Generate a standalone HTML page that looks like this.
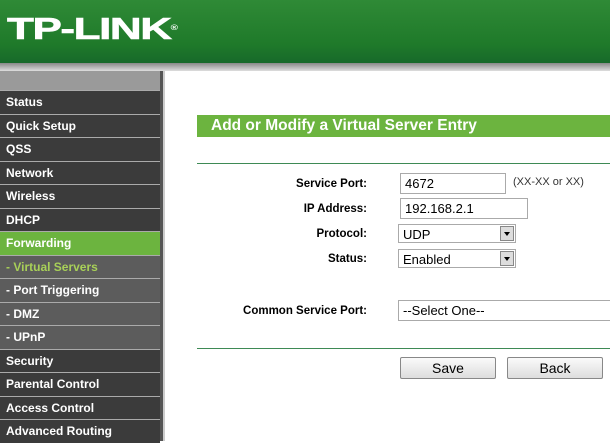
<!DOCTYPE html><html><head><style>
body{margin:0;width:610px;height:441px;overflow:hidden;background:#fff;font-family:"Liberation Sans",Arial,sans-serif;position:relative}
.hdr{position:absolute;left:0;top:0;width:610px;height:63px;background:linear-gradient(#2f8a36,#1f7a2a 70%,#17692a)}
.logo{position:absolute;left:7px;top:13px;color:#fff;font-weight:900;font-size:31px;letter-spacing:-1px;transform:scaleX(1.42);transform-origin:left;line-height:32px;-webkit-text-stroke:0.6px #fff}
.strip{position:absolute;top:63px;left:0;width:610px;height:8px;background:linear-gradient(#888,#ddd)}
.side{position:absolute;left:0;top:71px;width:160px;height:370px;background:#999}
.side .top{height:19px;background:#9a9a9a}
.it{height:22.5px;border-top:1px solid #aaa;background:#3b3b3b;color:#fff;font-weight:bold;font-size:12px;line-height:22px;padding-left:6px}
.sub{background:#5c5c5c}
.act{background:#6cb43f}
.vs{color:#a8d058}
.bar{position:absolute;left:160px;top:71px;width:3px;height:370px;background:#555;border-right:2px solid #ccc}
.title{position:absolute;left:197px;top:115px;width:413px;height:22px;background:#6cb43f;color:#fff;font-weight:bold;font-size:15.5px;line-height:22px;padding-left:14px}
.hl{position:absolute;left:197px;width:413px;height:1px;background:#3e8a55}
.lbl{position:absolute;width:170px;text-align:right;font-size:11.5px;font-weight:bold;color:#000;left:197px}
.in{position:absolute;border:1px solid #aaa;height:19px;font-size:13px;line-height:19px;padding-left:4px;box-sizing:border-box;background:#fff}
.sel .ar{position:absolute;right:1px;top:1px;width:14px;height:15px;background:#ddd;border:1px solid #888;box-sizing:border-box}
.sel .ar:after{content:"";position:absolute;left:3px;top:5px;border:3px solid transparent;border-top:4px solid #000}
.btn{position:absolute;top:357px;height:20px;width:94px;border:1px solid #888;border-radius:2px;background:linear-gradient(#fafafa,#ddd);text-align:center;font-size:14px;line-height:20px}
</style></head><body>
<div class="hdr"><div class="logo">TP-LINK<span style="font-size:7px;vertical-align:top;-webkit-text-stroke:0">®</span></div></div>
<div class="strip"></div>
<div class="side"><div class="top"></div>
<div class="it">Status</div><div class="it">Quick Setup</div><div class="it">QSS</div><div class="it">Network</div><div class="it">Wireless</div><div class="it">DHCP</div><div class="it act">Forwarding</div><div class="it sub vs">- Virtual Servers</div><div class="it sub">- Port Triggering</div><div class="it sub">- DMZ</div><div class="it sub">- UPnP</div><div class="it">Security</div><div class="it">Parental Control</div><div class="it">Access Control</div><div class="it">Advanced Routing</div>
</div>
<div class="bar"></div>
<div class="title">Add or Modify a Virtual Server Entry</div>
<div class="hl" style="top:163px"></div>
<div class="lbl" style="top:178px">Service Port:</div>
<div class="lbl" style="top:203px">IP Address:</div>
<div class="lbl" style="top:228px">Protocol:</div>
<div class="lbl" style="top:253px">Status:</div>
<div class="lbl" style="top:305px">Common Service Port:</div>
<div class="in" style="left:400px;top:173px;width:106px;height:21px">4672</div>
<div style="position:absolute;left:513px;top:176px;font-size:11px;color:#333">(XX-XX or XX)</div>
<div class="in" style="left:400px;top:198px;width:128px;height:21px">192.168.2.1</div>
<div class="in sel" style="left:398px;top:224px;width:118px">UDP<span class="ar"></span></div>
<div class="in sel" style="left:398px;top:249px;width:118px">Enabled<span class="ar"></span></div>
<div class="in" style="left:398px;top:300px;width:220px;height:21px">--Select One--</div>
<div class="hl" style="top:348px"></div>
<div class="btn" style="left:400px">Save</div>
<div class="btn" style="left:507px">Back</div>
</body></html>
